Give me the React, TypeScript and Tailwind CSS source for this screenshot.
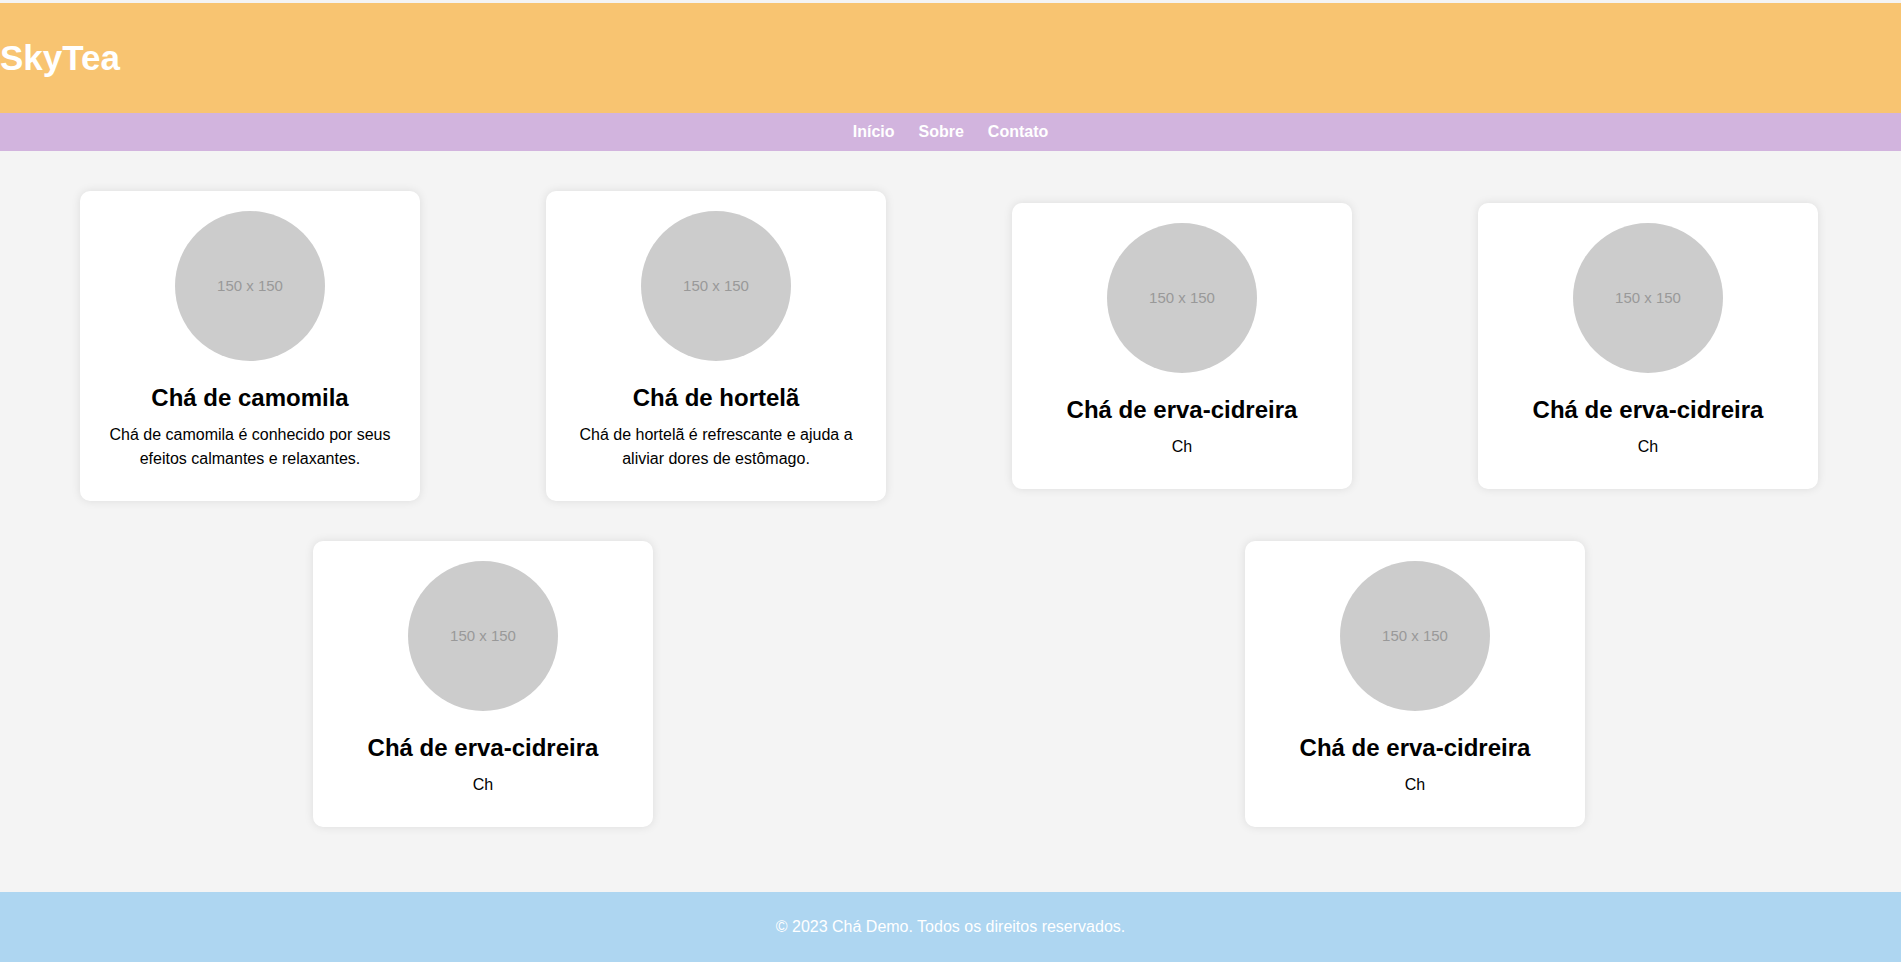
import React from 'react';

type Tea = { name: string; desc: string };

const teas: Tea[] = [
  { name: 'Chá de camomila', desc: 'Chá de camomila é conhecido por seus efeitos calmantes e relaxantes.' },
  { name: 'Chá de hortelã', desc: 'Chá de hortelã é refrescante e ajuda a aliviar dores de estômago.' },
  { name: 'Chá de erva-cidreira', desc: 'Ch' },
  { name: 'Chá de erva-cidreira', desc: 'Ch' },
  { name: 'Chá de erva-cidreira', desc: 'Ch' },
  { name: 'Chá de erva-cidreira', desc: 'Ch' },
];

const Placeholder = () => (
  <div className="mx-auto flex h-[150px] w-[150px] items-center justify-center rounded-full bg-[#cccccc] text-[15px] text-[#999999]">
    150 x 150
  </div>
);

const TeaCard: React.FC<{ tea: Tea }> = ({ tea }) => (
  <div className="m-[20px] w-[340px] rounded-[10px] bg-white px-[20px] pt-[20px] pb-[30px] text-center shadow-[0_0_10px_rgba(0,0,0,0.1)]">
    <Placeholder />
    <h2 className="mt-[23px] text-[24px] leading-[28px] font-bold text-black">{tea.name}</h2>
    <p className="mt-[11px] text-[16px] leading-[24px] text-black">{tea.desc}</p>
  </div>
);

export default function App() {
  const navItems = ['Início', 'Sobre', 'Contato'];

  return (
    <div className="min-h-screen bg-[#f4f4f4] pt-[3px] font-['Liberation_Sans',Arial,sans-serif]">
      <header className="flex h-[110px] items-center bg-[#f8c471]">
        <h1 className="text-[35px] font-bold text-white">SkyTea</h1>
      </header>

      <nav className="flex justify-center gap-[24px] bg-[#d2b4de] py-[10px]">
        {navItems.map(item => (
          <a key={item} href="#" className="text-[16px] leading-[18px] font-bold text-white">
            {item}
          </a>
        ))}
      </nav>

      {/* cards wrap 4 + 2, spread with space-around */}
      <main className="flex flex-wrap items-center justify-around pl-[17px] pr-[20px] pt-[20px] pb-[45px]">
        {teas.map((tea, i) => (
          <TeaCard key={i} tea={tea} />
        ))}
      </main>

      <footer className="bg-[#aed6f1] py-[26px] text-center text-[16px] leading-[18px] text-white">
        © 2023 Chá Demo. Todos os direitos reservados.
      </footer>
    </div>
  );
}
